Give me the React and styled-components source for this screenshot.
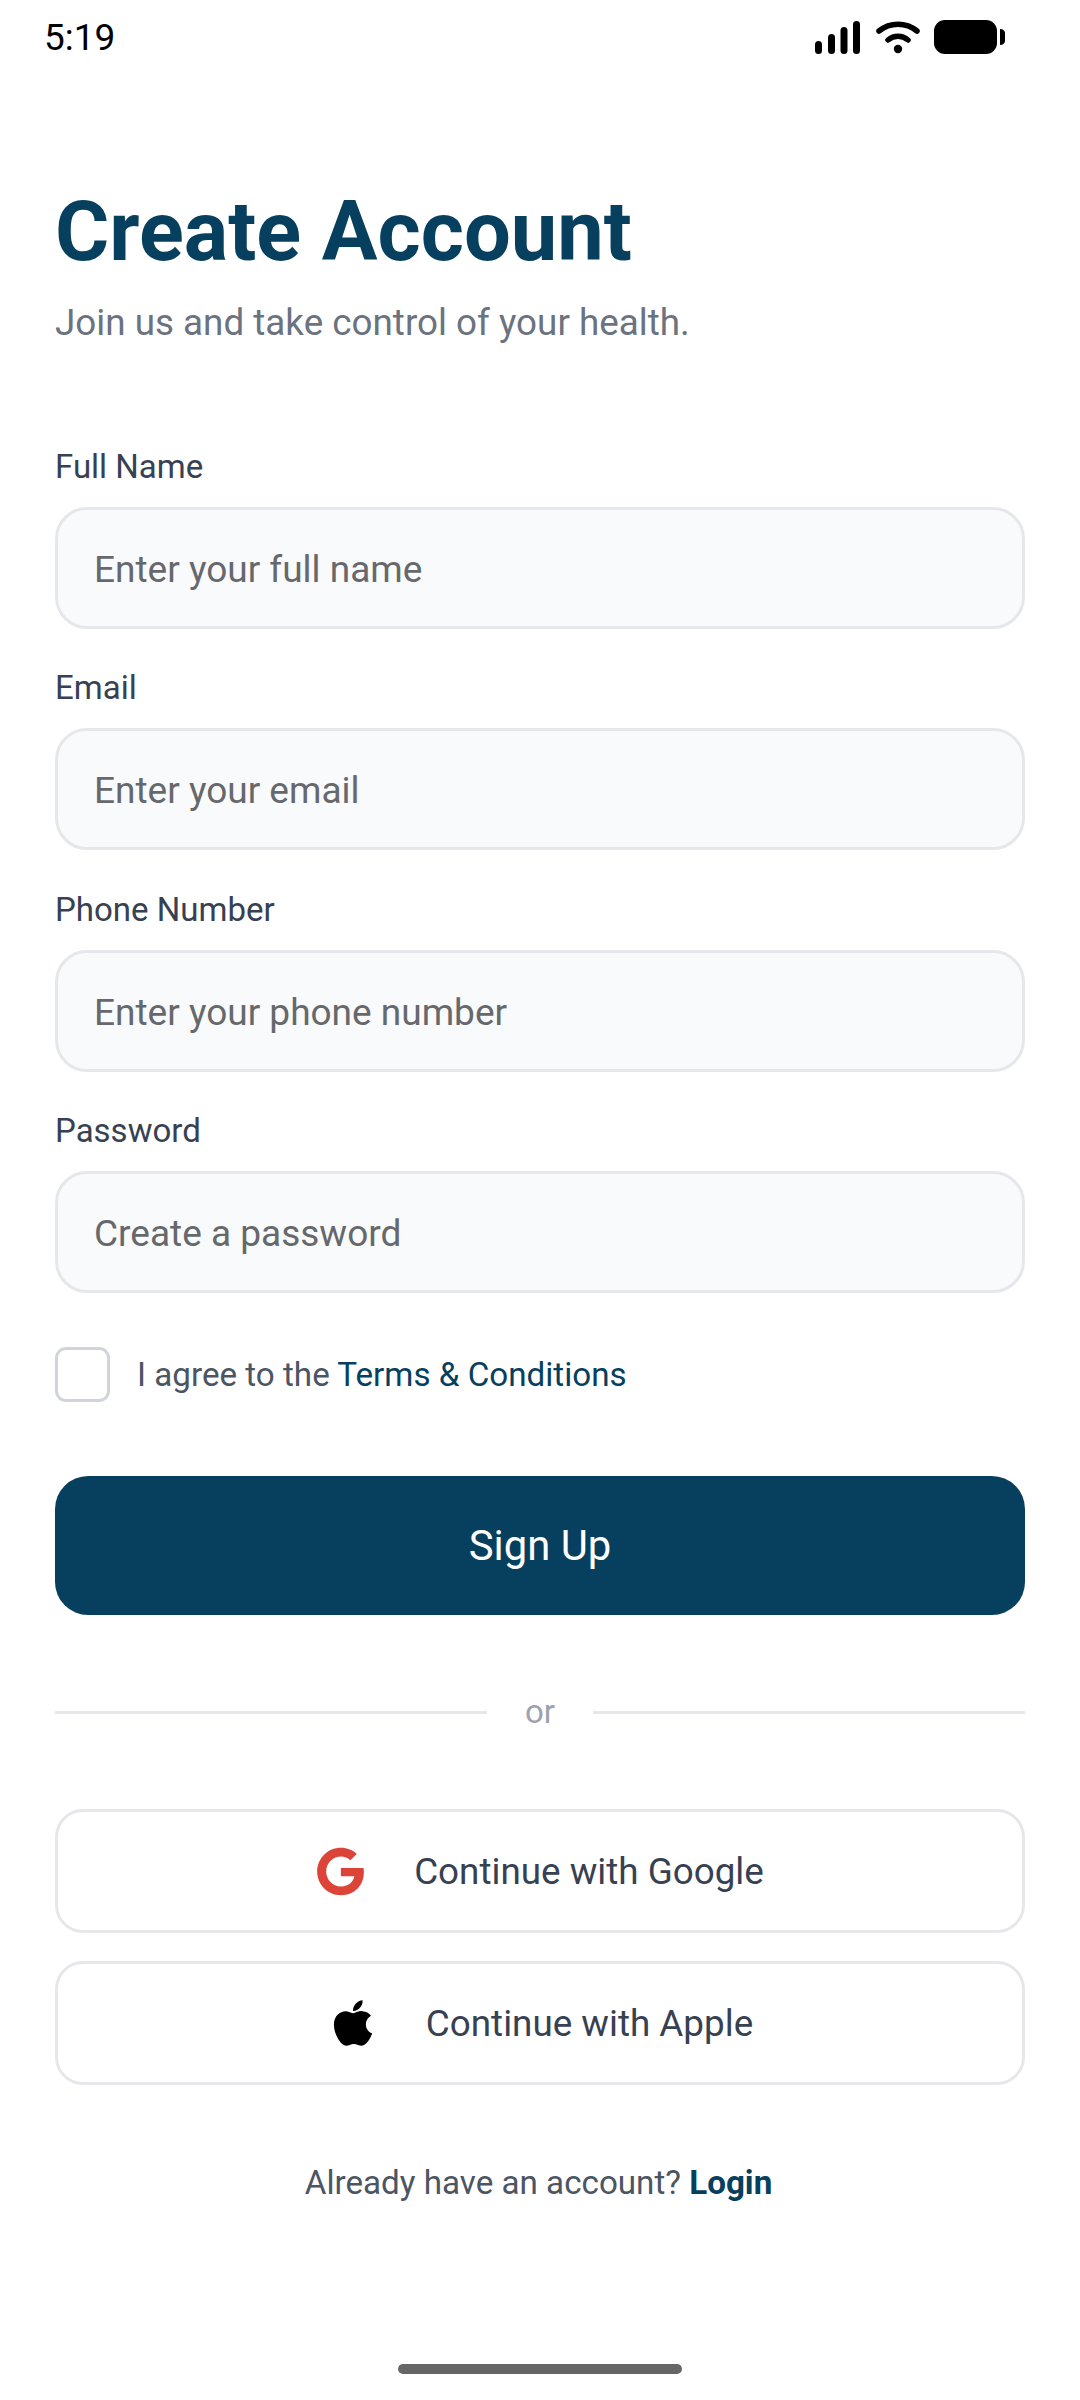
import React from 'react'
import styled, { createGlobalStyle } from 'styled-components'
import { FaApple, FaGoogle } from 'react-icons/fa'

const GlobalStyle = createGlobalStyle`
  html, body {
    margin: 0;
    padding: 0;
    background: #fff;
  }
  * {
    box-sizing: border-box;
  }
`

const Screen = styled.div`
  display: flex;
  flex-direction: column;
  width: 1080px;
  height: 2400px;
  background: #fff;
  font-family: Roboto, "Liberation Sans", sans-serif;
`
const StatusBar = styled.div`
  display: flex;
  align-items: center;
  justify-content: space-between;
  height: 74px;
  padding: 0 75px 0 44px;
`
const Time = styled.span`
  font-size: 37px;
  color: #000;
`
const StatusIcons = styled.div`
  display: flex;
  align-items: center;
  gap: 14.5px;
`
const Content = styled.div`
  display: flex;
  flex-direction: column;
  flex: 1;
  padding: 114px 55px 0;
`
const Title = styled.h1`
  margin: 0;
  font-size: 83px;
  line-height: 88px;
  font-weight: 700;
  color: #07405e;
`
const Subtitle = styled.p`
  margin: 24px 0 0;
  font-size: 36.8px;
  line-height: 46px;
  color: #6b7280;
`
const Form = styled.form`
  display: flex;
  flex-direction: column;
  gap: 40.5px;
  margin-top: 101.5px;
`
const Field = styled.div`
  display: flex;
  flex-direction: column;
  gap: 21px;
`
const Label = styled.label`
  font-size: 33px;
  line-height: 38px;
  color: #374151;
`
const Input = styled.input`
  width: 100%;
  height: 122px;
  padding: 3px 36px 0;
  background: #f9fafb;
  border: 3px solid #e5e7eb;
  border-radius: 32px;
  font-family: inherit;
  font-size: 37px;
  color: #374151;
  outline: none;
  &::placeholder {
    color: #66686c;
    opacity: 1;
  }
`
const Agree = styled.div`
  display: flex;
  align-items: center;
  gap: 27px;
  margin-top: 54px;
`
const CheckBox = styled.span`
  width: 55px;
  height: 55px;
  background: #fff;
  border: 3px solid #d1d5db;
  border-radius: 11px;
`
const AgreeText = styled.span`
  font-size: 33.2px;
  color: #4b5563;
`
const TermsLink = styled.a`
  color: #07405e;
`
const SignUp = styled.button`
  height: 139px;
  margin-top: 74px;
  border: 0;
  border-radius: 33px;
  background: #07405e;
  color: #fff;
  font-family: inherit;
  font-size: 41.8px;
`
const Divider = styled.div`
  display: flex;
  align-items: center;
  gap: 38px;
  margin-top: 78px;
`
const Rule = styled.span`
  flex: 1;
  height: 3px;
  background: #e5e7eb;
`
const Or = styled.span`
  font-size: 33px;
  line-height: 38px;
  color: #9ca3af;
`
const Socials = styled.div`
  display: flex;
  flex-direction: column;
  gap: 28px;
  margin-top: 78px;
`
const SocialButton = styled.button`
  display: flex;
  align-items: center;
  justify-content: center;
  gap: ${(props) => props.$gap}px;
  height: 124px;
  background: #fff;
  border: 3px solid #e5e7eb;
  border-radius: 28px;
  font-family: inherit;
  font-size: 36.8px;
  color: #374151;
`
const Footer = styled.p`
  margin: 78px 0 0;
  padding-right: 3px;
  font-size: 33.2px;
  line-height: 40px;
  text-align: center;
  color: #4b5563;
`
const LoginLink = styled.a`
  font-weight: 700;
  color: #07405e;
`
const HomeBar = styled.div`
  align-self: center;
  width: 284px;
  height: 10px;
  margin-bottom: 26px;
  border-radius: 5px;
  background: #666;
`

const SignalIcon = () => (
  <svg width="46" height="33" viewBox="0 0 46 33">
    <rect x="0" y="20" width="7" height="13" rx="3.5" />
    <rect x="13" y="13" width="7" height="20" rx="3.5" />
    <rect x="25.5" y="6" width="7" height="27" rx="3.5" />
    <rect x="38" y="0" width="7" height="33" rx="3.5" />
  </svg>
)

const WifiIcon = () => (
  <svg width="44" height="33" viewBox="0 0 44 33">
    <path d="M3 10 C14 1 30 1 41 10" fill="none" stroke="#000" strokeWidth="5.5" strokeLinecap="round" />
    <path d="M12 19 C18 14 26 14 32 19" fill="none" stroke="#000" strokeWidth="5.5" strokeLinecap="round" />
    <circle cx="22" cy="28" r="4.2" />
  </svg>
)

const BatteryIcon = () => (
  <svg width="71" height="34" viewBox="0 0 71 34">
    <rect x="0" y="0" width="63" height="34" rx="11" />
    <path d="M66 9 C69 9 71 11 71 13 V21 C71 23 69 25 66 25 Z" />
  </svg>
)

const fields = [
  { label: 'Full Name', placeholder: 'Enter your full name' },
  { label: 'Email', placeholder: 'Enter your email' },
  { label: 'Phone Number', placeholder: 'Enter your phone number' },
  { label: 'Password', placeholder: 'Create a password' },
]

const App = () => (
  <>
    <GlobalStyle />
    <Screen>
      <StatusBar>
        <Time>5:19</Time>
        <StatusIcons>
          <SignalIcon />
          <WifiIcon />
          <BatteryIcon />
        </StatusIcons>
      </StatusBar>
      <Content>
        <Title>Create Account</Title>
        <Subtitle>Join us and take control of your health.</Subtitle>
        <Form>
          {fields.map((field) => (
            <Field key={field.label}>
              <Label>{field.label}</Label>
              <Input placeholder={field.placeholder} readOnly />
            </Field>
          ))}
        </Form>
        <Agree>
          <CheckBox />
          <AgreeText>
            I agree to the <TermsLink>Terms &amp; Conditions</TermsLink>
          </AgreeText>
        </Agree>
        <SignUp>Sign Up</SignUp>
        <Divider>
          <Rule />
          <Or>or</Or>
          <Rule />
        </Divider>
        <Socials>
          <SocialButton $gap={49}>
            <FaGoogle size={49} color="#db4437" />
            Continue with Google
          </SocialButton>
          <SocialButton $gap={47}>
            <FaApple size={52} color="#000" />
            Continue with Apple
          </SocialButton>
        </Socials>
        <Footer>
          Already have an account? <LoginLink>Login</LoginLink>
        </Footer>
      </Content>
      <HomeBar />
    </Screen>
  </>
)

export default App
